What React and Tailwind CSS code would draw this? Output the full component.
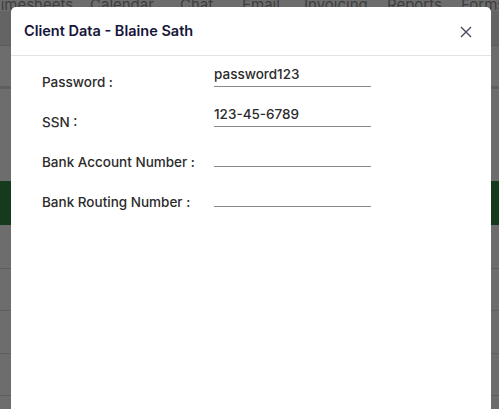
import React from "react";

const rows = [
  { label: "Password :", value: "password123" },
  { label: "SSN :", value: "123-45-6789" },
  { label: "Bank Account Number :", value: "" },
  { label: "Bank Routing Number :", value: "" },
];

export default function App() {
  return (
    <div className="relative w-[499px] h-[409px] overflow-hidden bg-[#6d6d6d]" style={{ fontFamily: "Inter, 'Noto Sans', sans-serif" }}>
      {/* background page under overlay */}
      <div className="flex flex-col">
        <div className="h-[11px] overflow-hidden">
          <div className="flex -ml-[9px] -mt-[3px] text-[15px] leading-[15px] text-[#3e3e3e] whitespace-nowrap">
            <span className="w-[99px] shrink-0">Timesheets</span>
            <span className="w-[90px] shrink-0">Calendar</span>
            <span className="w-[62px] shrink-0">Chat</span>
            <span className="w-[62px] shrink-0">Email</span>
            <span className="w-[83px] shrink-0">Invoicing</span>
            <span className="w-[74px] shrink-0">Reports</span>
            <span className="w-[60px] shrink-0">Forms</span>
          </div>
        </div>
        <div className="h-[35px] bg-[#646464] border-b border-[#5c5c5c]" />
        <div className="h-[43px] border-b-[3px] border-[#5f5f5f]" />
        <div className="h-[92px]" />
        <div className="h-[44px] bg-[#163a1c]" />
        <div className="h-[44px] border-b border-[#5e5e5e]" />
        <div className="h-[42px] border-b border-[#5e5e5e]" />
        <div className="h-[43px] border-b border-[#5e5e5e]" />
        <div className="h-[42px] border-b border-[#5e5e5e]" />
      </div>

      {/* modal */}
      <div className="absolute left-[11px] top-[7px] w-[480px] h-[420px] bg-white rounded-[5px] flex flex-col">
        <div className="h-[49px] flex items-center justify-between pl-[13px] pr-[19px] border-b border-[#e3e3e3]">
          <span className="text-[14.5px] font-semibold text-[#16163a] -mt-[1px]">Client Data - Blaine Sath</span>
          <svg width="12" height="12" viewBox="0 0 12 12" className="mt-[2px]">
            <path d="M1 1 L11 11 M11 1 L1 11" stroke="#4a4a5a" strokeWidth="1.4" />
          </svg>
        </div>
        <div className="flex flex-col pl-[31px] gap-[8px] -mt-[1px]">
          {rows.map((r) => (
            <div key={r.label} className="flex items-end h-[32px]">
              <span className="w-[172px] text-[13.5px] font-medium text-[#2b2b2b] leading-none mb-[-2px]">{r.label}</span>
              <div className="w-[157px] h-[24px] border-b border-[#8a8a8a] flex items-center text-[13.5px] font-medium text-[#2b2b2b] leading-none">
                {r.value}
              </div>
            </div>
          ))}
        </div>
      </div>
    </div>
  );
}
